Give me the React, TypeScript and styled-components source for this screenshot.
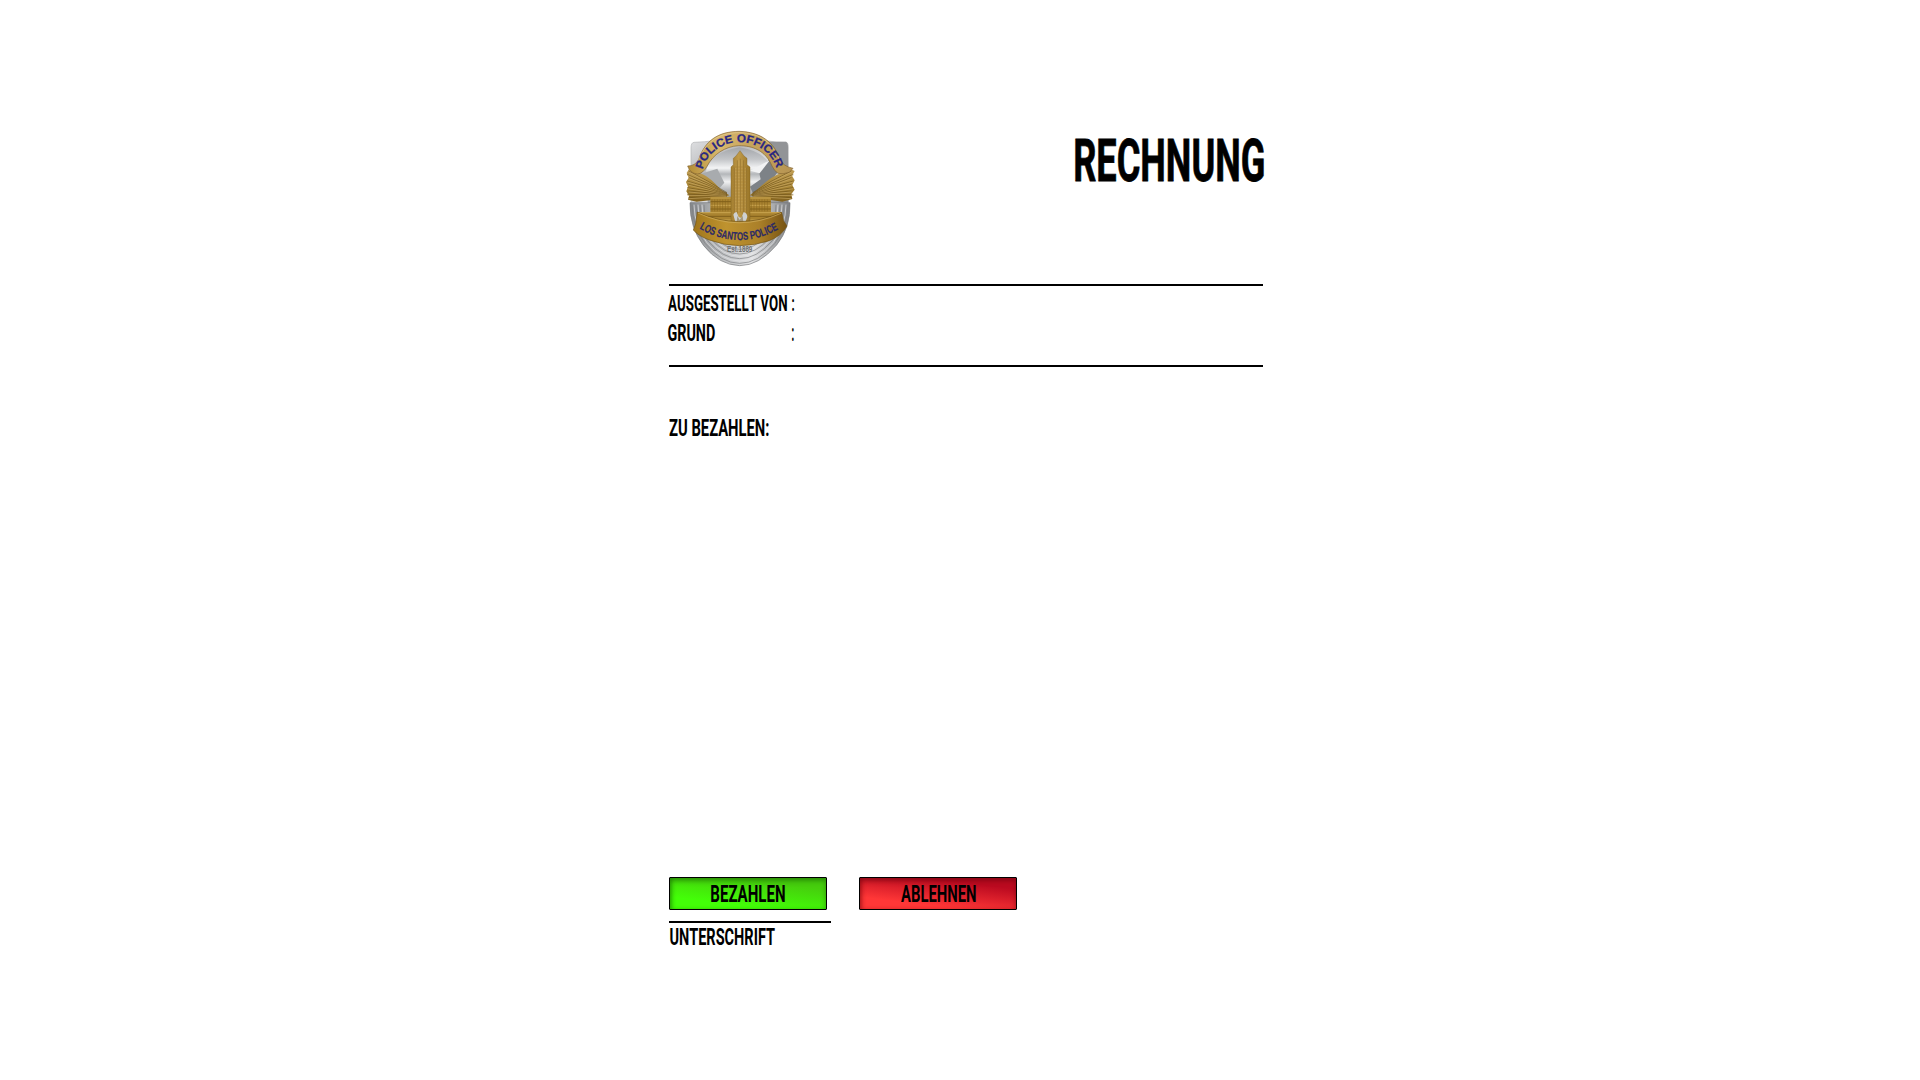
import React, { useLayoutEffect, useState } from "react";
import styled, { createGlobalStyle } from "styled-components";

const GlobalStyle = createGlobalStyle`
  html, body { margin: 0; background: #fff; }
  body { font-family: Roboto, "Liberation Sans", sans-serif; color: #000; overflow: hidden; }
`;

const CAP_HEIGHT = 0.711;

const Fit = styled.span<{ $w: number; $cap: number }>`
  display: block;
  flex: none;
  width: ${(p) => p.$w}px;
  height: ${(p) => p.$cap}px;
`;

const Glyphs = styled.span<{ $cap: number; $weight: number; $stroke: number }>`
  display: block;
  width: max-content;
  white-space: pre;
  font-size: ${(p) => p.$cap / CAP_HEIGHT}px;
  line-height: ${(p) => p.$cap * 1.04}px;
  font-weight: ${(p) => p.$weight};
  font-kerning: none;
  transform-origin: 0 0;
  -webkit-text-stroke: ${(p) => p.$stroke}px currentColor;
`;

type CondensedProps = { text: string; width: number; cap: number; weight?: number; stroke?: number };

/* Sets a caption in tall, narrow capitals that fill the given width. */
function Condensed({ text, width, cap, weight = 700, stroke = 0 }: CondensedProps) {
  const [transform, setTransform] = useState("none");
  useLayoutEffect(() => {
    const ctx = document.createElement("canvas").getContext("2d");
    if (!ctx) return;
    ctx.font = `${weight} ${cap / CAP_HEIGHT}px Roboto, "Liberation Sans", sans-serif`;
    ctx.fontKerning = "none";
    const m = ctx.measureText(text);
    const ink = m.actualBoundingBoxRight + m.actualBoundingBoxLeft;
    const scale = width / ink;
    setTransform(`translateX(${m.actualBoundingBoxLeft * scale}px) scaleX(${scale})`);
  }, [text, width, cap, weight]);
  return (
    <Fit $w={width} $cap={cap}>
      <Glyphs $cap={cap} $weight={weight} $stroke={stroke} style={{ transform }}>{text}</Glyphs>
    </Fit>
  );
}

const Sheet = styled.main`
  box-sizing: border-box;
  width: 1264px;
  height: 1080px;
  padding: 120px 0 0 669px;
  display: flex;
  flex-direction: column;
`;

const Header = styled.header`
  display: flex;
  justify-content: space-between;
  height: 164px;
  margin-right: 1px;
`;

const Title = styled.h1`
  margin: 19px -1px 0 0;
`;

const Rule = styled.hr<{ $w?: number }>`
  flex: none;
  margin: 0;
  border: 0;
  width: ${(p) => p.$w ?? 594}px;
  height: 2px;
  background: #000;
`;

const Details = styled.section`
  box-sizing: border-box;
  height: 79px;
  padding-top: 9px;
  margin-left: -1px;
`;

const Row = styled.div<{ $h: number }>`
  display: flex;
  justify-content: space-between;
  width: 126px;
  height: ${(p) => p.$h}px;
`;

const Amount = styled.section`
  box-sizing: border-box;
  height: 510px;
  padding-top: 53px;
`;

const Actions = styled.div`
  display: flex;
  gap: 32px;
  margin-bottom: 11px;
`;

const Button = styled.button<{ $kind: "pay" | "decline" }>`
  box-sizing: border-box;
  width: 158px;
  height: 33px;
  margin: 0;
  padding: 8px 0 0 41px;
  border: 1px solid #000;
  border-radius: 1px;
  font: inherit;
  color: #000;
  text-align: left;
  display: flex;
  align-items: flex-start;
  background: ${(p) =>
    p.$kind === "pay"
      ? "linear-gradient(187deg, #46ce0d 22%, #43ff08 76%)"
      : "linear-gradient(187deg, #bb0a20 22%, #ff3737 76%)"};
  box-shadow:
    inset 0 3px 5px ${(p) => (p.$kind === "pay" ? "rgba(20,90,0,.5)" : "rgba(100,0,12,.5)")},
    inset 3px 0 4px -1px ${(p) => (p.$kind === "pay" ? "rgba(20,110,0,.4)" : "rgba(130,0,12,.4)")};
`;

const Signature = styled.footer`
  padding: 6px 0 0 1px;
`;

const Shield = styled.svg`
  display: block;
  margin-left: 1px;
  width: 140px;
  height: 155px;
`;

const levels = [0, 1, 2, 3, 4, 5, 6];

function Badge() {
  return (
    <Shield viewBox="0 0 420 465" aria-label="Los Santos Police">
      <defs>
        <linearGradient id="silver" x1="0" y1="0" x2="1" y2="1">
          <stop offset="0" stopColor="#dedfe1" />
          <stop offset=".3" stopColor="#b9babd" />
          <stop offset=".6" stopColor="#e6e7e8" />
          <stop offset="1" stopColor="#77797c" />
        </linearGradient>
        <linearGradient id="sky" x1="0" y1="0" x2="0" y2="1">
          <stop offset="0" stopColor="#a3a6aa" />
          <stop offset=".2" stopColor="#c3c5c8" />
          <stop offset=".35" stopColor="#f3f4f5" />
          <stop offset=".45" stopColor="#b4b7ba" />
          <stop offset=".58" stopColor="#f0f1f2" />
          <stop offset=".72" stopColor="#b4b6b9" />
          <stop offset="1" stopColor="#95989b" />
        </linearGradient>
        <linearGradient id="bowl" x1="0" y1="0" x2="1" y2="0">
          <stop offset="0" stopColor="#85888b" />
          <stop offset=".3" stopColor="#bcbec0" />
          <stop offset=".62" stopColor="#e3e4e5" />
          <stop offset="1" stopColor="#7f8184" />
        </linearGradient>
        <linearGradient id="arch" x1="0" y1="0" x2="1" y2="0">
          <stop offset="0" stopColor="#b38c35" />
          <stop offset=".3" stopColor="#d9b86e" />
          <stop offset=".6" stopColor="#c6a45d" />
          <stop offset="1" stopColor="#b69452" />
        </linearGradient>
        <linearGradient id="ribbon" x1="0" y1="0" x2="1" y2="0">
          <stop offset="0" stopColor="#a0761c" />
          <stop offset=".35" stopColor="#bf932f" />
          <stop offset=".7" stopColor="#ab8029" />
          <stop offset="1" stopColor="#765313" />
        </linearGradient>
        <linearGradient id="tower" x1="0" y1="0" x2="1" y2="0">
          <stop offset="0" stopColor="#a37e30" />
          <stop offset=".4" stopColor="#c09a48" />
          <stop offset="1" stopColor="#9a7628" />
        </linearGradient>
        <linearGradient id="wing" x1="0" y1="0" x2="0" y2="1">
          <stop offset="0" stopColor="#c2a056" />
          <stop offset=".6" stopColor="#a58232" />
          <stop offset="1" stopColor="#80601d" />
        </linearGradient>
        <path id="topText" d="M98 149 C126 39 291 39 321 150" />
        <path id="bottomText" d="M85 324 Q207 397 332 324" />
      </defs>

      {/* plate */}
      <path d="M72 67 Q104 66 132 62 L288 62 Q320 68 349 67 Q356 68 355 90 L356 270 H63 V84 Q63 68 72 67Z" fill="url(#silver)" stroke="#b3b5b7" strokeWidth="2" />
      <path d="M285 65 H348 Q354 68 354 80 V148 L323 145Z" fill="#929497" />
      <path d="M107 155 Q122 96 208 82 Q292 95 311 155 L304 260 H114Z" fill="url(#sky)" />
      <path d="M92 162 L142 146 L163 188 L139 216Z" fill="#a8abae" />
      <path d="M267 155 L306 108 L328 151 L293 195 L248 218 L240 200 L272 178Z" fill="#7d8287" />
      <path d="M240 152 L300 120 L269 160Z" fill="#f1f2f3" />

      {/* lower bowl */}
      <path d="M60 248 H360 Q362 323 320 375 Q267 437 209 437 Q147 435 101 377 Q59 324 60 248Z" fill="url(#bowl)" stroke="#77797b" strokeWidth="2" />
      {levels.map((i) => (
        <path
          key={i}
          d={`M${66 + i * 6} 254 Q${67 + i * 6} ${320 - i * 2} ${106 + i * 4} ${371 - i * 4} Q${154 + i * 2} ${430 - i * 7} 209 ${430 - i * 7} Q${264 - i * 2} ${430 - i * 7} ${314 - i * 4} ${371 - i * 4} Q${353 - i * 6} ${320 - i * 2} ${354 - i * 6} 254`}
          fill="none"
          stroke={i % 2 ? "#e6e6e8" : "#7b7d80"}
          strokeWidth="2"
        />
      ))}

      {/* wings */}
      <path d="M57 147 L50 159 L56 173 L48 186 L54 200 L49 214 L57 228 L54 239 L80 245 L132 239 L178 226 L154 211 Q121 172 92 160Z" fill="url(#wing)" />
      <path d="M361 147 L374 153 L366 167 L374 181 L367 195 L374 209 L364 222 L367 237 L337 245 L288 238 L239 226 L260 211 Q299 172 331 160Z" fill="url(#wing)" />
      {[0, 1, 2, 3, 4, 5, 6, 7, 8].map((i) => (
        <g key={i} fill="none" strokeWidth="1.7">
          <path d={`M${56 - (i % 2) * 5} ${153 + i * 10} Q112 ${181 + i * 6} 171 ${218 + i * 1.5}`} stroke="#6a4f18" />
          <path d={`M${57 - (i % 2) * 5} ${156 + i * 10} Q112 ${184 + i * 6} 169 ${221 + i * 1.2}`} stroke="#cbac68" />
          <path d={`M${364 + (i % 2) * 6} ${153 + i * 10} Q304 ${181 + i * 6} 248 ${218 + i * 1.5}`} stroke="#6a4f18" />
          <path d={`M${364 + (i % 2) * 6} ${156 + i * 10} Q304 ${184 + i * 6} 250 ${221 + i * 1.2}`} stroke="#cbac68" />
        </g>
      ))}

      {/* city hall */}
      <path d="M121 230 H303 V276 H335 L326 337 Q207 375 91 337 L80 278 H121Z" fill="#a98330" />
      {levels.map((i) => (
        <path key={i} d={`M${i < 4 ? 122 : 85} ${234 + i * 11} H${i < 4 ? 302 : 332}`} stroke={i % 2 ? "#80601b" : "#c9a550"} strokeWidth="3" />
      ))}
      {levels.map((i) => (
        <path key={i} d={`M${126 + i * 8} 238 V274 M${244 + i * 8} 238 V274`} stroke="#84631d" strokeWidth="1.5" />
      ))}
      <g transform="translate(2 0)">
        <path d="M181 304 V141 L188 134 V115 L196 108 L208 92 L220 108 L229 115 V134 L238 141 V304Z" fill="url(#tower)" stroke="#7f601f" strokeWidth="1.2" />
        <path d="M191 143 V292 M200 121 V282 M209 116 V275 M218 121 V282 M228 143 V292" stroke="#86662a" strokeWidth="1.5" />
        <path d="M195 143 V288 M205 121 V278 M214 120 V278 M224 143 V288" stroke="#ccaa62" strokeWidth="1.5" />
        {Array.from({ length: 16 }, (_, i) => (
          <path key={i} d={`M188 ${141 + i * 9} H231`} stroke="#a47d2c" strokeWidth="1.5" />
        ))}
        <path d="M188 284 Q190 276 198 276 L204 291 L212 294 L219 276 Q230 279 230 291 L223 309 H195Z" fill="#cfd1d2" />
        <path d="M200 288 L207 300 L216 287 L218 306 H198Z" fill="#a3987d" />
      </g>

      {/* upper banner */}
      <path d="M53 138 Q75 138 86 119 C105 61 145 35 207 34 C274 36 312 67 331 119 Q339 139 369 145 L358 157 Q337 164 324 160 Q313 153 306 138 C286 91 248 77 206 77 C166 79 129 103 111 139 Q99 161 82 162 Q60 160 53 138Z" fill="url(#arch)" stroke="#846331" strokeWidth="2" />
      <path d="M83 130 C103 65 145 39 207 38 C271 39 307 67 329 122" fill="none" stroke="#e6ce95" strokeWidth="2" />
      <text fontFamily="Liberation Sans" fontWeight="700" fontSize="34" fill="#292783" stroke="#292783" strokeWidth=".8">
        <textPath href="#topText" textLength="294" lengthAdjust="spacingAndGlyphs">POLICE OFFICER</textPath>
      </text>

      {/* lower banner */}
      <path d="M82 276 Q205 333 335 277 L341 303 L351 318 Q333 349 298 362 Q208 393 118 360 Q84 347 70 330 L77 312Z" fill="url(#ribbon)" stroke="#705318" strokeWidth="2" />
      <path d="M84 279 Q206 337 333 280" fill="none" stroke="#d2b062" strokeWidth="2" />
      <text fontFamily="Liberation Sans" fontWeight="700" fontSize="34" fill="#2d2a66" stroke="#2d2a66" strokeWidth=".5">
        <textPath href="#bottomText" startOffset="3" textLength="250" lengthAdjust="spacingAndGlyphs">LOS SANTOS POLICE</textPath>
      </text>
      <text x="171" y="396" fontFamily="Liberation Sans" fontWeight="700" fontSize="27" fill="#727477" textLength="76" lengthAdjust="spacingAndGlyphs">Est.1889</text>
    </Shield>
  );
}

export default function App() {
  return (
    <>
      <GlobalStyle />
      <Sheet>
        <Header>
          <Badge />
          <Title><Condensed text="RECHNUNG" width={189} cap={42} stroke={0.8} /></Title>
        </Header>
        <Rule />
        <Details>
          <Row $h={30}>
            <Condensed text="AUSGESTELLT VON" width={119} cap={16} />
            <Condensed text=":" width={2} cap={16} />
          </Row>
          <Row $h={20}>
            <Condensed text="GRUND" width={47} cap={17} />
            <Condensed text=":" width={2} cap={17} />
          </Row>
        </Details>
        <Rule />
        <Amount>
          <Condensed text="ZU BEZAHLEN:" width={100} cap={17} />
        </Amount>
        <Actions>
          <Button $kind="pay"><Condensed text="BEZAHLEN" width={74} cap={17} /></Button>
          <Button $kind="decline"><Condensed text="ABLEHNEN" width={75} cap={17} /></Button>
        </Actions>
        <Rule $w={162} />
        <Signature><Condensed text="UNTERSCHRIFT" width={105} cap={17} /></Signature>
      </Sheet>
    </>
  );
}
